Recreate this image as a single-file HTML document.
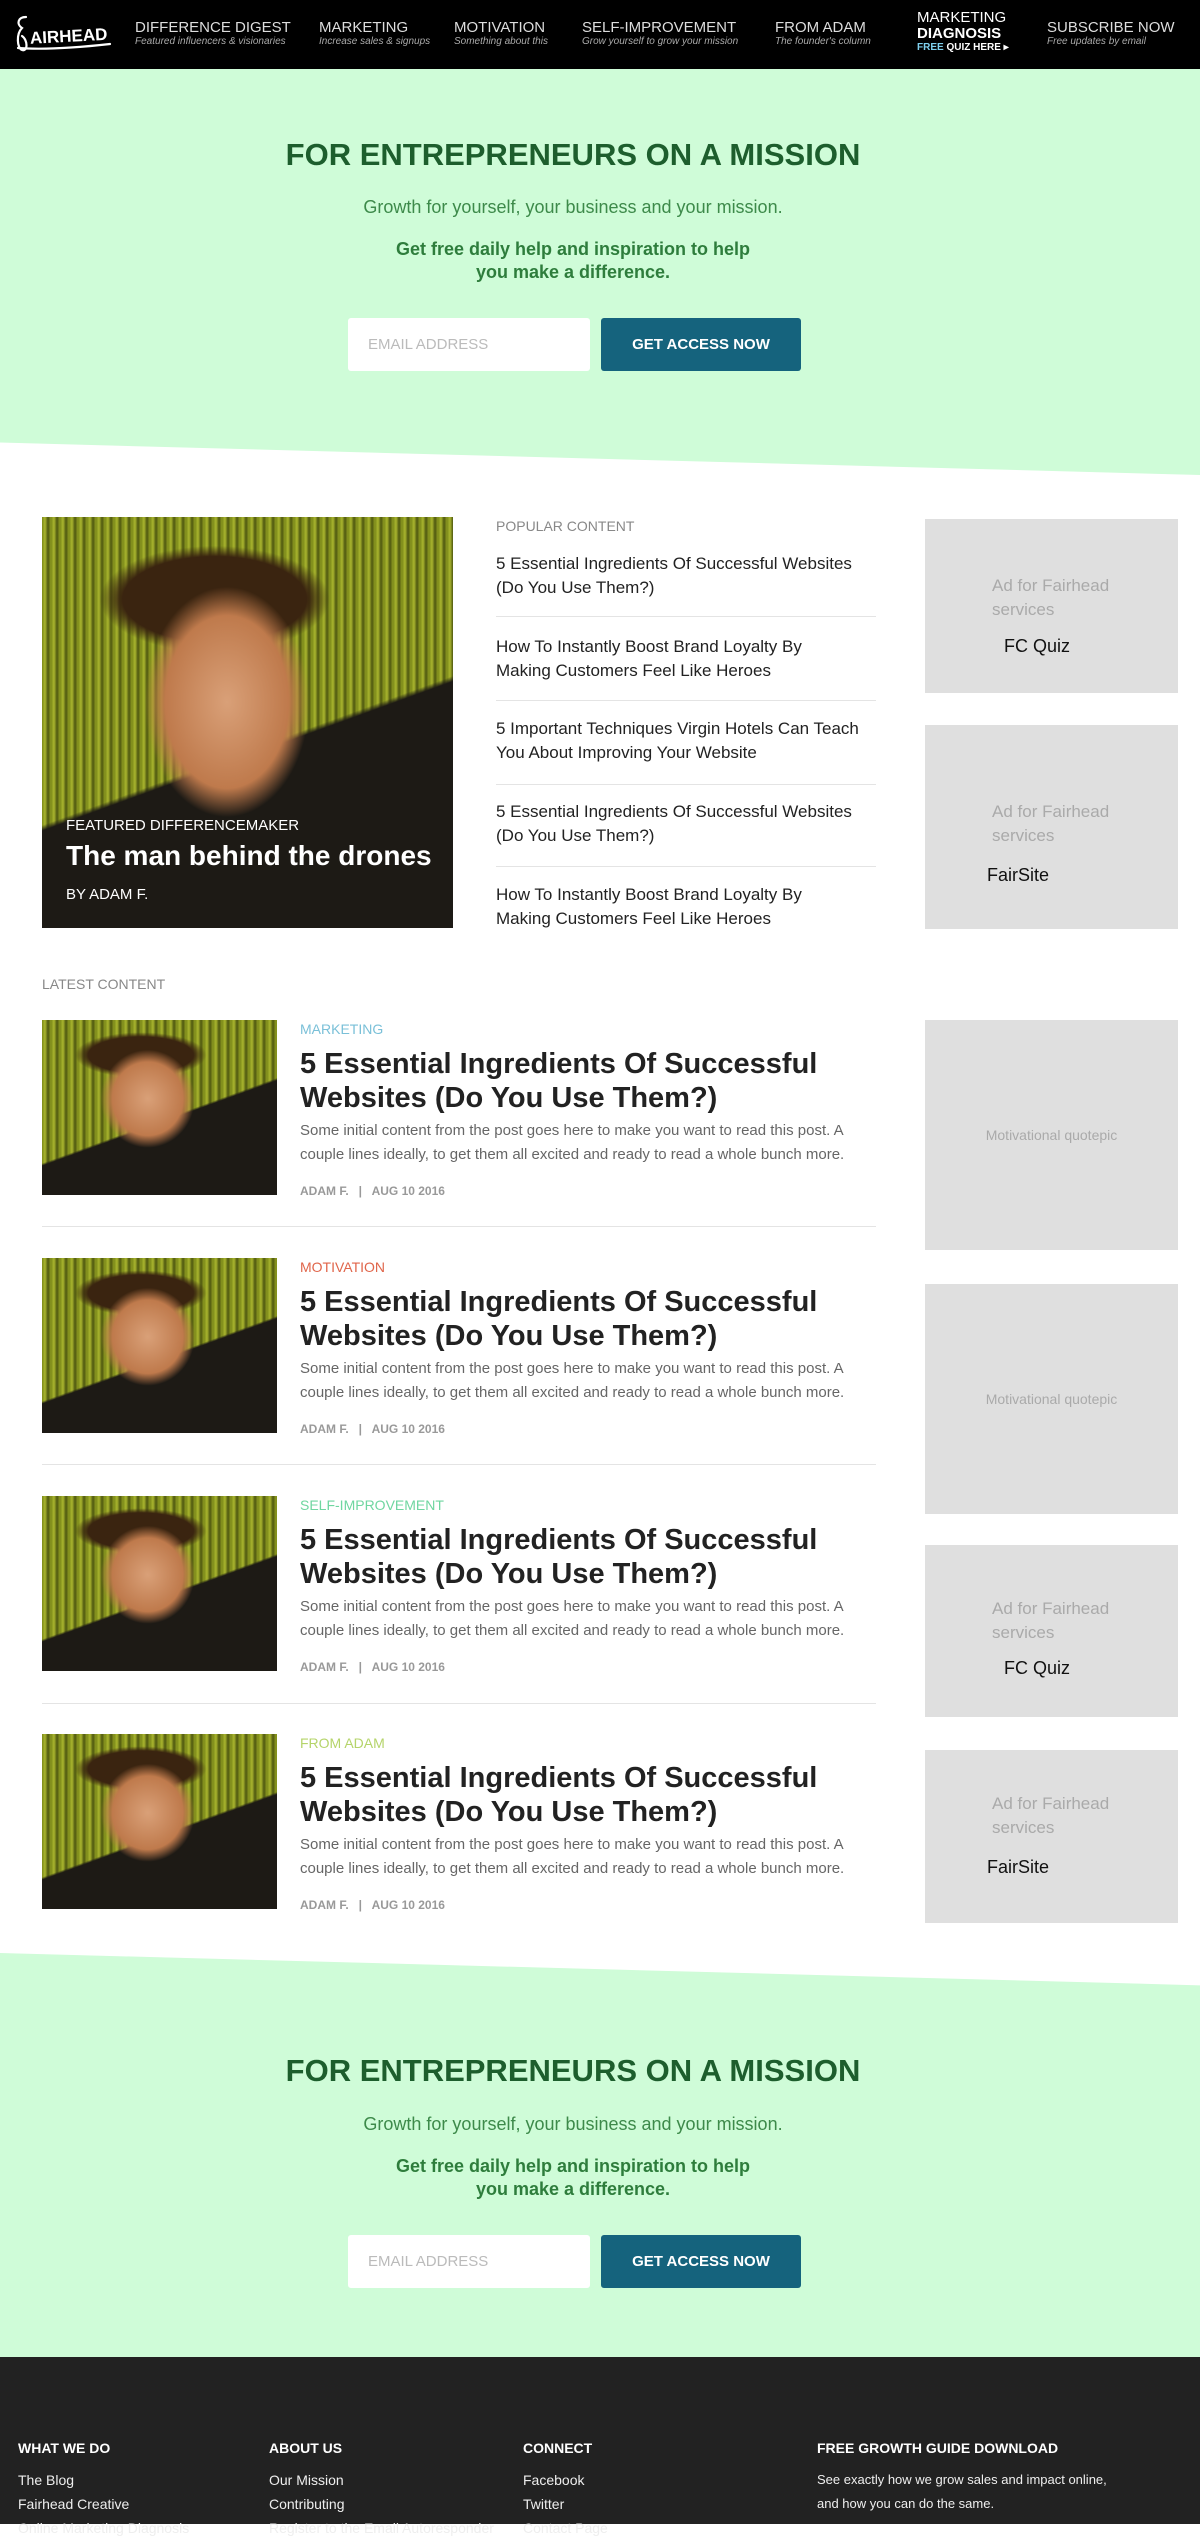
<!DOCTYPE html>
<html><head><meta charset="utf-8"><style>
*{margin:0;padding:0;box-sizing:border-box}
body{width:1200px;height:2524px;position:relative;overflow:hidden;background:#fff;font-family:"Liberation Sans",sans-serif;color:#222}
.a{position:absolute}
nav{position:absolute;left:0;top:0;width:1200px;height:69px;background:#000}
.ni{position:absolute;top:19px;color:#ddd;font-size:15px;line-height:17px;white-space:nowrap}
.ni small{display:block;font-size:10px;font-style:italic;color:#aaa;line-height:12px}
.green{background:#cffcd8}
.h1{position:absolute;left:0;width:1146px;text-align:center;color:#1d5e2d;font-weight:bold;font-size:31px}
.sub{position:absolute;left:0;width:1146px;text-align:center;color:#3d8a4a;font-size:18px}
.sub2{position:absolute;left:0;width:1146px;text-align:center;color:#2e7d3c;font-weight:bold;font-size:18px;line-height:23px}
.inp{position:absolute;left:348px;width:242px;height:53px;background:#fff;border-radius:3px;color:#bbb;font-size:15px;line-height:53px;padding-left:20px}
.btn{position:absolute;left:601px;width:200px;height:53px;background:#15637d;border-radius:3px;color:#fff;font-weight:bold;font-size:15px;line-height:53px;text-align:center}
.photo{position:absolute;background:
radial-gradient(ellipse 20% 28% at 45% 45%,#d9a078 0,#bf7a4c 75%,rgba(0,0,0,0) 100%),
radial-gradient(ellipse 28% 13% at 42% 20%,#3a2410 0,#3a2410 80%,rgba(0,0,0,0) 100%),
linear-gradient(160deg,rgba(0,0,0,0) 55%,#1d1a15 56%),
repeating-linear-gradient(90deg,#7c8a1a 0,#a9b52e 3px,#4e5710 6px,#8d9a20 9px);}
.lbl{position:absolute;color:#888;font-size:14px}
.pop{position:absolute;left:496px;font-size:17px;line-height:24px;color:#222;white-space:nowrap}
.div{position:absolute;height:1px;background:#e4e4e4}
.ad{position:absolute;left:925px;width:253px;background:#dfdfdf}
.ad .t{position:absolute;left:67px;color:#aaa;font-size:17px;line-height:24px}
.ad .b{position:absolute;color:#111;font-size:18px}
.ad .q{position:absolute;width:100%;text-align:center;color:#aaa;font-size:14px}
.cat{position:absolute;left:300px;font-size:14px}
.tt{position:absolute;left:300px;width:560px;font-size:29px;line-height:34px;font-weight:bold;color:#222}
.ex{position:absolute;left:300px;width:580px;font-size:15px;line-height:24px;color:#666}
.meta{position:absolute;left:300px;font-size:12px;color:#999;font-weight:bold}
.fh{position:absolute;top:2440px;color:#fff;font-weight:bold;font-size:14px}
.fl{position:absolute;color:#eee;font-size:14px;line-height:24px}
</style></head><body>
<nav>
<svg class="a" style="left:14px;top:14px" width="100" height="42" viewBox="0 0 100 42"><g fill="none" stroke="#fff" stroke-width="2.2" stroke-linecap="round"><path d="M12 3C4 3 2 10 8 14C2 20 3 34 8 36C14 38 14 26 8 22"/><path d="M4 34C30 36 60 34 96 30"/></g><text x="16" y="28" fill="#fff" font-family="Liberation Sans" font-size="17" font-weight="bold" transform="rotate(-3 50 24)">AIRHEAD</text></svg>
<div class="ni" style="left:135px">DIFFERENCE DIGEST<small>Featured influencers &amp; visionaries</small></div>
<div class="ni" style="left:319px">MARKETING<small>Increase sales &amp; signups</small></div>
<div class="ni" style="left:454px">MOTIVATION<small>Something about this</small></div>
<div class="ni" style="left:582px">SELF-IMPROVEMENT<small>Grow yourself to grow your mission</small></div>
<div class="ni" style="left:775px">FROM ADAM<small>The founder's column</small></div>
<div class="ni" style="left:917px;top:10px;color:#fff;line-height:16px">MARKETING<br><b>DIAGNOSIS</b><small style="font-style:normal;font-weight:bold;color:#fff;font-size:10px"><span style="color:#7fd0ee">FREE</span> QUIZ HERE ▸</small></div>
<div class="ni" style="left:1047px">SUBSCRIBE NOW<small>Free updates by email</small></div>
</nav>
<div class="a green" style="left:0;top:69px;width:1200px;height:406px;clip-path:polygon(0 0,100% 0,100% 100%,0 92%)"></div>
<div class="h1" style="top:137px">FOR ENTREPRENEURS ON A MISSION</div>
<div class="sub" style="top:197px">Growth for yourself, your business and your mission.</div>
<div class="sub2" style="top:238px">Get free daily help and inspiration to help<br>you make a difference.</div>
<div class="inp" style="top:318px">EMAIL ADDRESS</div>
<div class="btn" style="top:318px">GET ACCESS NOW</div>

<div class="photo" style="left:42px;top:517px;width:411px;height:411px"></div>
<div class="a" style="left:66px;top:817px;color:#fff;font-size:15px">FEATURED DIFFERENCEMAKER</div>
<div class="a" style="left:66px;top:840px;color:#fff;font-size:28px;font-weight:bold">The man behind the drones</div>
<div class="a" style="left:66px;top:886px;color:#fff;font-size:15px">BY ADAM F.</div>

<div class="lbl" style="left:496px;top:518px">POPULAR CONTENT</div>
<div class="pop" style="top:552px">5 Essential Ingredients Of Successful Websites<br>(Do You Use Them?)</div>
<div class="div" style="left:496px;top:616px;width:380px"></div>
<div class="pop" style="top:635px">How To Instantly Boost Brand Loyalty By<br>Making Customers Feel Like Heroes</div>
<div class="div" style="left:496px;top:700px;width:380px"></div>
<div class="pop" style="top:717px">5 Important Techniques Virgin Hotels Can Teach<br>You About Improving Your Website</div>
<div class="div" style="left:496px;top:784px;width:380px"></div>
<div class="pop" style="top:800px">5 Essential Ingredients Of Successful Websites<br>(Do You Use Them?)</div>
<div class="div" style="left:496px;top:866px;width:380px"></div>
<div class="pop" style="top:883px">How To Instantly Boost Brand Loyalty By<br>Making Customers Feel Like Heroes</div>

<div class="ad" style="top:519px;height:174px"><div class="t" style="top:55px">Ad for Fairhead<br>services</div><div class="b" style="left:79px;top:117px">FC Quiz</div></div>
<div class="ad" style="top:725px;height:204px"><div class="t" style="top:75px">Ad for Fairhead<br>services</div><div class="b" style="left:62px;top:140px">FairSite</div></div>

<div class="lbl" style="left:42px;top:976px">LATEST CONTENT</div>

<div class="photo" style="left:42px;top:1020px;width:235px;height:175px"></div>
<div class="cat" style="top:1021px;color:#7ac0d8">MARKETING</div>
<div class="tt" style="top:1047px">5 Essential Ingredients Of Successful Websites (Do You Use Them?)</div>
<div class="ex" style="top:1119px">Some initial content from the post goes here to make you want to read this post. A couple lines ideally, to get them all excited and ready to read a whole bunch more.</div>
<div class="meta" style="top:1184px">ADAM F. &nbsp; | &nbsp; AUG 10 2016</div>
<div class="div" style="left:42px;top:1226px;width:834px"></div>

<div class="photo" style="left:42px;top:1258px;width:235px;height:175px"></div>
<div class="cat" style="top:1259px;color:#e0654a">MOTIVATION</div>
<div class="tt" style="top:1285px">5 Essential Ingredients Of Successful Websites (Do You Use Them?)</div>
<div class="ex" style="top:1357px">Some initial content from the post goes here to make you want to read this post. A couple lines ideally, to get them all excited and ready to read a whole bunch more.</div>
<div class="meta" style="top:1422px">ADAM F. &nbsp; | &nbsp; AUG 10 2016</div>
<div class="div" style="left:42px;top:1464px;width:834px"></div>

<div class="photo" style="left:42px;top:1496px;width:235px;height:175px"></div>
<div class="cat" style="top:1497px;color:#6fd6a0">SELF-IMPROVEMENT</div>
<div class="tt" style="top:1523px">5 Essential Ingredients Of Successful Websites (Do You Use Them?)</div>
<div class="ex" style="top:1595px">Some initial content from the post goes here to make you want to read this post. A couple lines ideally, to get them all excited and ready to read a whole bunch more.</div>
<div class="meta" style="top:1660px">ADAM F. &nbsp; | &nbsp; AUG 10 2016</div>
<div class="div" style="left:42px;top:1703px;width:834px"></div>

<div class="photo" style="left:42px;top:1734px;width:235px;height:175px"></div>
<div class="cat" style="top:1735px;color:#b5d46a">FROM ADAM</div>
<div class="tt" style="top:1761px">5 Essential Ingredients Of Successful Websites (Do You Use Them?)</div>
<div class="ex" style="top:1833px">Some initial content from the post goes here to make you want to read this post. A couple lines ideally, to get them all excited and ready to read a whole bunch more.</div>
<div class="meta" style="top:1898px">ADAM F. &nbsp; | &nbsp; AUG 10 2016</div>

<div class="ad" style="top:1020px;height:230px"><div class="q" style="top:107px">Motivational quotepic</div></div>
<div class="ad" style="top:1284px;height:230px"><div class="q" style="top:107px">Motivational quotepic</div></div>
<div class="ad" style="top:1545px;height:172px"><div class="t" style="top:52px">Ad for Fairhead<br>services</div><div class="b" style="left:79px;top:113px">FC Quiz</div></div>
<div class="ad" style="top:1750px;height:173px"><div class="t" style="top:42px">Ad for Fairhead<br>services</div><div class="b" style="left:62px;top:107px">FairSite</div></div>

<div class="a green" style="left:0;top:1953px;width:1200px;height:404px;clip-path:polygon(0 0,100% 8%,100% 100%,0 100%)"></div>
<div class="h1" style="top:2053px">FOR ENTREPRENEURS ON A MISSION</div>
<div class="sub" style="top:2114px">Growth for yourself, your business and your mission.</div>
<div class="sub2" style="top:2155px">Get free daily help and inspiration to help<br>you make a difference.</div>
<div class="inp" style="top:2235px">EMAIL ADDRESS</div>
<div class="btn" style="top:2235px">GET ACCESS NOW</div>

<div class="a" style="left:0;top:2357px;width:1200px;height:167px;background:#222"></div>
<div class="fh" style="left:18px">WHAT WE DO</div>
<div class="fh" style="left:269px">ABOUT US</div>
<div class="fh" style="left:523px">CONNECT</div>
<div class="fh" style="left:817px">FREE GROWTH GUIDE DOWNLOAD</div>
<div class="fl" style="left:18px;top:2468px">The Blog<br>Fairhead Creative<br>Online Marketing Diagnosis</div>
<div class="fl" style="left:269px;top:2468px">Our Mission<br>Contributing<br>Register to the Email Autoresponder</div>
<div class="fl" style="left:523px;top:2468px">Facebook<br>Twitter<br>Contact Page</div>
<div class="fl" style="left:817px;top:2468px;font-size:13px">See exactly how we grow sales and impact online,<br>and how you can do the same.</div>
</body></html>
